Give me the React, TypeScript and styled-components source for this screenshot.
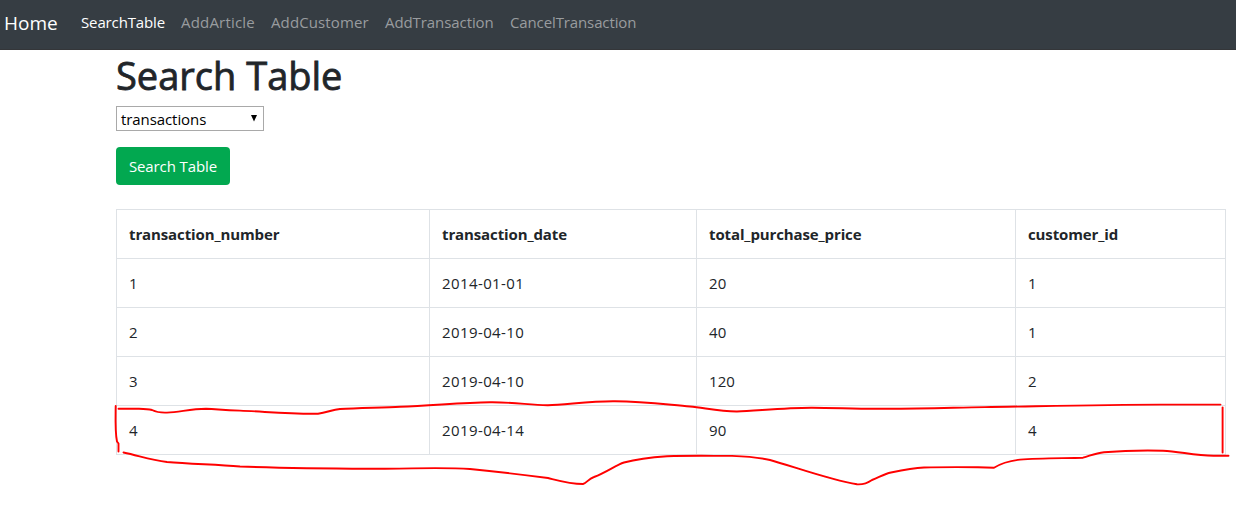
import React from "react";
import styled, { createGlobalStyle } from "styled-components";

const GlobalStyle = createGlobalStyle`
  *, *::before, *::after { box-sizing: border-box; }
  body {
    margin: 0;
    overflow: hidden;
    background: #fff;
    color: #212529;
    font-family: "Segoe UI", "Open Sans", "Noto Sans", sans-serif;
    font-size: 15px;
    line-height: 24px;
  }
`;

const Page = styled.div`
  position: relative;
  min-height: 517px;
`;

const Navbar = styled.nav`
  display: flex;
  align-items: center;
  height: 50px;
  padding: 0 4px 6px;
  border-bottom: 1px solid #343639;
  background: #363d43;
`;

const Brand = styled.a`
  width: 69px;
  padding-top: 2px;
  color: #fff;
  font-size: 19px;
  line-height: 30px;
  white-space: nowrap;
`;

const NavLink = styled.a<{ $width: number; $spacing: number; $active?: boolean }>`
  box-sizing: content-box;
  width: ${(p) => p.$width}px;
  padding: 0 8px;
  letter-spacing: ${(p) => p.$spacing}px;
  color: ${(p) => (p.$active ? "#fff" : "#999c9f")};
  white-space: nowrap;
`;

const Content = styled.main`
  display: flex;
  flex-direction: column;
  align-items: flex-start;
  padding: 1px 10px 0 116px;
`;

const Title = styled.h1`
  margin: 0 0 7px;
  font-size: 38px;
  font-weight: 400;
  line-height: 48px;
  -webkit-text-stroke: 0.8px currentColor;
`;

const Select = styled.div`
  display: flex;
  align-items: center;
  justify-content: space-between;
  width: 148px;
  height: 25px;
  padding: 1px 5px 0 4px;
  border: 1px solid #a9a9a9;
  color: #000;
  letter-spacing: -0.08px;
`;

const Arrow = styled.svg`
  width: 8px;
  height: 7px;
  margin-bottom: 2px;
`;

const Button = styled.button`
  width: 114px;
  height: 38px;
  margin: 16px 0 24px;
  padding: 0;
  border: 0;
  border-radius: 4px;
  background: #02a850;
  color: #fff;
  font: inherit;
  letter-spacing: -0.1px;
  white-space: nowrap;
`;

const Table = styled.table`
  width: 1110px;
  border-collapse: collapse;
  table-layout: fixed;
`;

const Column = styled.col<{ $width: number }>`
  width: ${(p) => p.$width}px;
`;

const HeaderCell = styled.th`
  height: 49px;
  padding: 0 12px;
  border: 1px solid #dee2e6;
  font-weight: 700;
  letter-spacing: -0.12px;
  text-align: left;
`;

const Cell = styled.td<{ $spacing: number }>`
  height: 49px;
  padding: 0 12px;
  border: 1px solid #dee2e6;
  letter-spacing: ${(p) => p.$spacing}px;
`;

const Marks = styled.svg`
  position: absolute;
  inset: 0;
  pointer-events: none;
`;

const links = [
  { label: "SearchTable", width: 84, spacing: -0.13, active: true },
  { label: "AddArticle", width: 74, spacing: 0.2 },
  { label: "AddCustomer", width: 98, spacing: 0.12 },
  { label: "AddTransaction", width: 109, spacing: -0.08 },
  { label: "CancelTransaction", width: 127, spacing: -0.12 },
];

const columns = [
  { name: "transaction_number", width: 313, spacing: 0 },
  { name: "transaction_date", width: 267, spacing: 0.4 },
  { name: "total_purchase_price", width: 319, spacing: 0.1 },
  { name: "customer_id", width: 210, spacing: 0 },
];

const rows = [
  ["1", "2014-01-01", "20", "1"],
  ["2", "2019-04-10", "40", "1"],
  ["3", "2019-04-10", "120", "2"],
  ["4", "2019-04-14", "90", "4"],
];

export default function App() {
  return (
    <Page>
      <GlobalStyle />
      <Navbar>
        <Brand>Home</Brand>
        {links.map((l) => (
          <NavLink key={l.label} $width={l.width} $spacing={l.spacing} $active={l.active}>
            {l.label}
          </NavLink>
        ))}
      </Navbar>
      <Content>
        <Title>Search Table</Title>
        <Select>
          transactions
          <Arrow viewBox="0 0 8 7">
            <path d="M1 0H7L4 6.5Z" fill="#000" />
          </Arrow>
        </Select>
        <Button>Search Table</Button>
        <Table>
          <colgroup>
            {columns.map((c) => (
              <Column key={c.name} $width={c.width} />
            ))}
          </colgroup>
          <thead>
            <tr>
              {columns.map((c) => (
                <HeaderCell key={c.name}>{c.name}</HeaderCell>
              ))}
            </tr>
          </thead>
          <tbody>
            {rows.map((row) => (
              <tr key={row[0]}>
                {row.map((value, i) => (
                  <Cell key={i} $spacing={columns[i].spacing}>
                    {value}
                  </Cell>
                ))}
              </tr>
            ))}
          </tbody>
        </Table>
      </Content>
      <Marks width="1236" height="517" viewBox="0 0 1236 517" fill="none" stroke="#ff0000" strokeWidth="1.9" strokeLinecap="round" strokeLinejoin="round">
        <path d="M118.500 408.700H139Q148 409 152 410Q158 413 167 412.600C180 412 190 409 206 408.700C218 409 222 410.500 240 410.600C265 411.500 285 414 318 413.700C327 412.500 332 409.800 340 409C360 408 385 407.500 400 406.700C430 406 460 402.600 490 402.300C515 402 530 405.300 548 405.200C565 405 590 401 615 401.300C645 401.300 670 405 690 406.500C705 408 720 411.600 737 411.500C755 411 785 407.600 812 407.700C835 407.700 855 409 880 408.800C925 409 955 407.500 985 407.100C1030 406.500 1100 404.600 1160 404.600H1220.500" />
        <path d="M115.700 406C115.500 420 115 432 117 441.500L118.500 443.500V451.500" />
        <path d="M123.500 452.500C140 456 150 460 167 462C190 464 215 464.500 240 466.500C300 468.500 340 468.500 385 468.800C420 468 450 467.500 470 469C500 472 525 475 548 478C560 481 570 484 583 484C587 483 588 479 594 477C607 472 616 465 624 462.500C635 459.500 655 457 667 456.200C690 455.500 710 455.900 732 455.900C748 456.500 758 457.300 770 460C792 466 830 480 857 484.300C863 484.700 867 483.500 872 480C879 477.500 884 474 891 472.500C903 470 913 468 924 467.500C940 467 955 467 978 467.200L994 467.700C1000 464 1007 461 1020 459.600C1040 458 1065 458.300 1083 457.700C1092 455 1096 453 1104 452.200C1125 450.500 1150 450.400 1163 450.700C1180 451.500 1195 455.800 1214 455.700H1228.500" />
        <path d="M1222.600 407.500V452.500" />
      </Marks>
    </Page>
  );
}
